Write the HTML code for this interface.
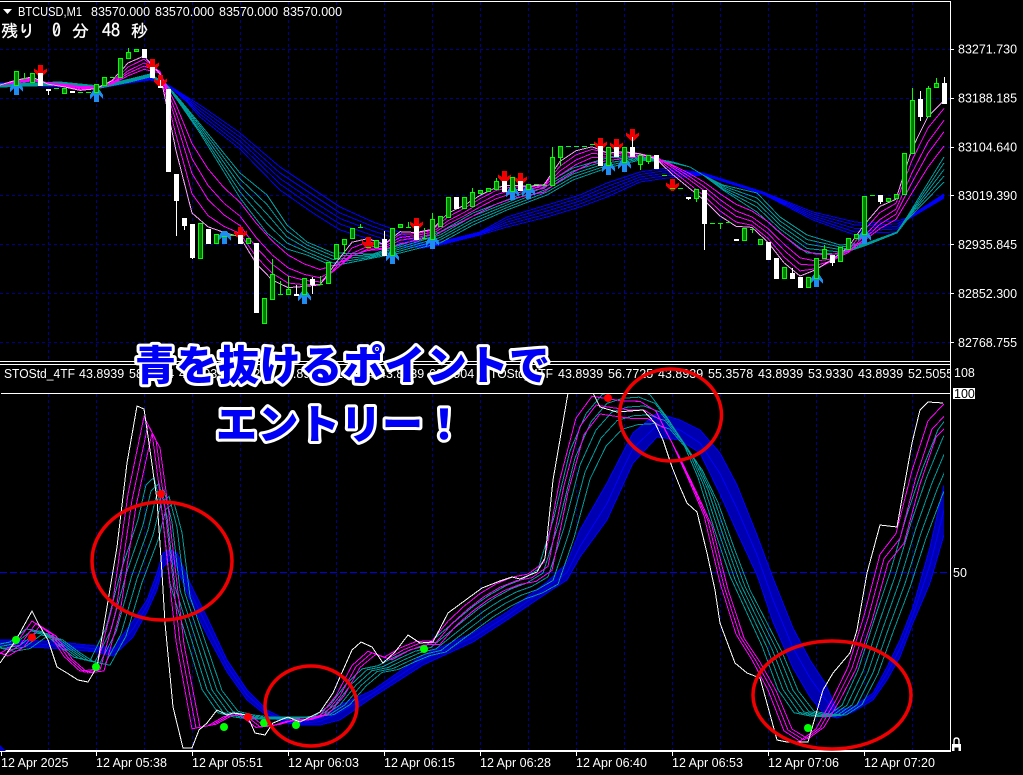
<!DOCTYPE html>
<html lang="ja"><head><meta charset="utf-8"><title>BTCUSD,M1</title>
<style>
html,body{margin:0;padding:0;background:#000;width:1023px;height:775px;overflow:hidden}
svg{position:absolute;left:0;top:0;display:block}
.t{font-family:"Liberation Sans",sans-serif;font-size:12.5px;fill:#fff}
.j{font-family:"IPAGothic","Noto Sans CJK JP",monospace;font-size:17px;fill:#fff;stroke:#fff;stroke-width:.35px}
.o{font-family:"Liberation Sans","Noto Sans CJK JP",sans-serif;font-weight:900;font-size:41px;fill:#0000f5;stroke:#fff;stroke-width:6px;stroke-linejoin:round;paint-order:stroke}
</style></head><body>
<svg xmlns="http://www.w3.org/2000/svg" width="1023" height="775" viewBox="0 0 1023 775">
<defs>
<clipPath id="c"><rect x="0" y="364" width="950" height="29"/></clipPath>
<clipPath id="lw"><rect x="0" y="394" width="944" height="356"/></clipPath>
<polygon id="ra" points="-2,0 3,0 3,6 7,3.500 7,7 1.500,12 -.5,12 -6,7 -6,3.500 -2,6"/>
<polygon id="ba" points=".5,-1 3,-1 7,5 7,9 3,5 3,12 -2,12 -2,5 -6,9 -6,5 -2,-1"/>
<polyline id="A" points="-32,640 0,654.700 16,645.300 32,623.300 48,634 64,657.700 80,672 96,670.100 112,610.500 128,500 144,425 152,440 160,500 176,642.600 192,728 208,725 224,716 240,714.500 256,726.600 272,725.100 288,720.200 304,720 320,714.900 336,695.900 352,666.500 368,652.700 384,658.600 400,649.500 416,643.200 432,642.600 448,623.500 464,609 480,596.700 496,587.300 512,580.800 528,577.700 544,566.400 560,485.500 576,426.300 592,405.100 608,407.600 624,409.800 640,410 656,419.600 672,450.400 688,484.700 704,520.800 720,586.200 736,636.100 752,661 768,690.300 784,730 800,740 816,728 832,700 848,668 864,618.200 880,558.600 896,538.400 912,477.300 928,429 944,412.400 960,405"/>
<polyline id="B" points="-32,640 0,648.300 16,645.300 32,633 48,635.500 64,648.300 80,659.700 96,663 112,632 128,575 144,530 152,497 160,490 168,522 176,590 192,640 208,690 224,712 240,716 256,718 272,718 288,718 304,717.400 320,715.500 336,704.900 352,685.100 368,670.700 384,667.600 400,659.800 416,652.700 432,648.900 448,636 464,623.400 480,611 496,600.600 512,592.100 528,586.300 544,576.800 560,527.600 576,465 592,430 608,412 624,407 640,406 656,412 672,432 688,455 704,490 720,538 736,583 752,616 768,649 784,690 800,712 816,715 832,716 848,705 864,672 880,625 896,580 912,528 928,483 944,445 960,425"/>
</defs>
<rect width="1023" height="775" fill="#000"/>
<g shape-rendering="crispEdges" fill="none" stroke="#00008c" stroke-dasharray="3 3">
<path d="M48.500 2V361M96.500 2V361M144.500 2V361M192.500 2V361M240.500 2V361M288.500 2V361M336.500 2V361M384.500 2V361M432.500 2V361M480.500 2V361M528.500 2V361M576.500 2V361M624.500 2V361M672.500 2V361M720.500 2V361M768.500 2V361M816.500 2V361M864.500 2V361M912.500 2V361"/>
<path d="M48.500 394V750M96.500 394V750M144.500 394V750M192.500 394V750M240.500 394V750M288.500 394V750M336.500 394V750M384.500 394V750M432.500 394V750M480.500 394V750M528.500 394V750M576.500 394V750M624.500 394V750M672.500 394V750M720.500 394V750M768.500 394V750M816.500 394V750M864.500 394V750M912.500 394V750"/>
<path d="M0 49.500H950M0 98.500H950M0 147.500H950M0 195.500H950M0 244.500H950M0 293.500H950M0 342.500H950"/>
</g>
<path d="M0 572.500H950" stroke="#0000e0" stroke-dasharray="7 3" shape-rendering="crispEdges"/>

<!-- upper ribbons -->
<g shape-rendering="crispEdges" fill="none">
<g stroke="#0000ff">
<polyline points="0,83 100,86 130,81 150,78 165,83 187,97 200,105 240,133 280,167 313,189 340,207 373,222 390,228 423,244 440,242 480,232 507,217 547,205 580,195 607,183 640,172 667,168 703,173 763,192 813,212 855,222 867,223 897,221 907,218 944,194"/>
<polyline points="0,83.500 100,86.500 130,81.500 150,78.500 165,83 187,98 200,108 240,137 280,173 313,195 340,213 373,226.500 390,232 423,245 440,243 480,233 507,219.500 547,208 580,198 607,186.500 640,174.500 667,170.500 703,173.500 763,192.500 813,214 855,225 867,225.500 897,224 907,218.500 944,195"/>
<polyline points="0,84 100,87 130,82 150,79 165,83 187,99.500 200,111 240,141 280,178.500 313,201 340,218.500 373,231 390,236.500 423,246 440,243.500 480,233.500 507,222 547,211 580,201 607,190 640,177 667,173 703,174 763,193 813,216 855,228.500 867,228 897,226.500 907,219 944,196"/>
<polyline points="0,84.500 100,87.500 130,82.500 150,79.500 165,83 187,101 200,114 240,145 280,184 313,207 340,224 373,235.500 390,241 423,247 440,244 480,234 507,224.500 547,214 580,204 607,193.500 640,179.500 667,175.500 703,174.500 763,193.500 813,218 855,232 867,230.500 897,229 907,219.500 944,197"/>
<polyline points="0,85 100,88 130,83 150,80 165,83 187,102 200,117 240,149 280,190 313,213 340,230 373,240 390,245 423,248 440,245 480,235 507,227 547,217 580,207 607,197 640,182 667,178 703,175 763,194 813,220 855,235 867,233 897,232 907,220 944,198"/>
</g>
<g stroke="#009b9b">
<polyline points="0,84 60,82 100,86 130,79 150,74 165,83 180,100 200,124 240,173 267,195 287,225 307,242 333,253 373,254 400,245 440,232 473,213 507,200 547,183 573,168 607,158 640,156 673,162 690,167 703,175 723,185 757,193 780,217 807,235 840,245 867,243 897,232 907,217 944,157"/>
<polyline points="0,84.800 60,82.800 100,86.500 130,79.800 150,74.800 165,83 180,101 200,126 240,179 267,204.500 287,231 307,245 333,256 373,255 400,247 440,235 473,216 507,202.500 547,186 573,171 607,160.500 640,157 673,162.300 690,167 703,175 723,186 757,198 780,221 807,239.500 840,247 867,243.500 897,232.300 907,218 944,163"/>
<polyline points="0,85.500 60,83.500 100,87 130,80.500 150,75.500 165,83 180,102 200,128.500 240,185.500 267,214 287,237 307,248.500 333,259.500 373,256 400,249 440,237.500 473,219 507,205 547,189 573,174 607,163 640,158 673,162.500 690,167 703,175 723,187.500 757,202.500 780,225 807,244 840,249.500 867,244 897,232.500 907,218.500 944,169.500"/>
<polyline points="0,86.300 60,84.300 100,87.500 130,81.300 150,76.300 165,83 180,103 200,131 240,192 267,223.500 287,243 307,252 333,263 373,257 400,251 440,240 473,222 507,207.500 547,192 573,177 607,165.500 640,159 673,162.800 690,167 703,175 723,189 757,207 780,229 807,248.500 840,252 867,244.500 897,232.800 907,219 944,176"/>
<polyline points="0,87 60,85 100,88 130,82 150,77 165,83 180,104 200,133 240,198 267,233 287,249 307,255 333,266 373,258 400,253 440,243 473,225 507,210 547,195 573,180 607,168 640,160 673,163 690,167 703,175 723,190 757,212 780,233 807,253 840,254 867,245 897,233 907,220 944,182"/>
</g>
<g stroke="#ff00ff">
<polyline points="0,85 16,83 32,80.900 48,82.800 64,84.300 80,86.500 96,86.900 112,84.100 128,75.800 144,69.300 160,72.900 176,104.800 192,143.500 208,168.900 224,187.700 240,202.300 256,222.900 272,240.700 288,255 304,263.800 320,269.500 336,264.800 352,255.800 368,250.400 384,249.400 400,243.700 416,240.600 432,237 448,228.200 464,220.700 480,212.300 496,204.300 512,198.600 528,195.300 544,192.100 560,180.400 576,170.600 592,162.700 608,160.800 624,158 640,157.100 656,158.200 672,164.700 688,172.700 704,182.100 720,193.700 736,204.300 752,211 768,221.800 784,236 800,249.100 816,254.200 832,254.400 848,250.900 864,240.700 880,228.600 896,219.400 912,192.900 928,167.100 944,146"/>
<polyline points="0,85 16,82.500 32,80 48,82.700 64,84.600 80,87.300 96,87.500 112,83.700 128,73.400 144,66.100 160,71.800 176,112.500 192,158.700 208,185.400 224,203.300 240,216.100 256,237.300 272,254.800 288,267.800 304,274.300 320,277.800 336,268.900 352,256 368,249.100 384,248.300 400,240.300 416,237.700 432,234.200 448,224 464,216 480,207 496,198.700 512,193.400 528,191.100 544,188.500 560,175 576,164.600 592,157.500 608,157 624,154.800 640,154.900 656,157 672,165.600 688,175.500 704,186.500 720,199.600 736,210.900 752,217 768,228.500 784,244.200 800,257.800 816,261.100 832,258.900 848,252.800 864,239.200 880,224.300 896,214.100 912,182.400 928,153.400 944,131.700"/>
<polyline points="0,85 16,81.900 32,79.100 48,82.800 64,85.100 80,88.100 96,88 112,83.200 128,70.900 144,63 160,71.300 176,121 192,173.500 208,199.500 224,215 240,225.500 256,247.100 272,264.100 288,275.900 304,280.300 320,281.900 336,269.300 352,253.400 368,246.200 384,246.600 400,237.500 416,235.500 432,232.300 448,220.800 464,212.500 480,203.100 496,194.800 512,190.100 528,188.700 544,186.600 560,171 576,160 592,153.400 608,154.500 624,153 640,153.800 656,156.900 672,167.400 688,178.600 704,190.500 720,204.700 736,216.200 752,221.300 768,233.400 784,250.300 800,264.200 816,265.400 832,260.800 848,252.600 864,236.100 880,219.500 896,209.200 912,172.800 928,141.800 944,120.400"/>
<polyline points="0,85 16,81.100 32,77.900 48,83.200 64,85.900 80,89.300 96,88.500 112,82.100 128,67 144,59.200 160,71.900 176,134.800 192,193.800 208,215.600 224,226.400 240,233.400 256,256.500 272,273.100 288,283 304,284.700 320,284.300 336,267 352,248 368,241.800 384,244.700 400,234.300 416,233.600 432,230.400 448,216.800 464,208.500 480,198.800 496,190.500 512,186.900 528,187 544,185.300 560,166.200 576,154.900 592,149.400 608,153 624,151.900 640,153.600 656,157.700 672,170.600 688,183 704,195.800 720,210.900 736,222 752,225.300 768,238.500 784,257 800,270.900 816,268.700 832,261 848,250.400 864,230.700 880,212.500 896,203.300 912,160.300 928,127.900 944,108.500"/>
</g>
<polyline stroke="#ffa0ff" points="0,85 16,80.200 32,77 48,84.200 64,86.800 80,90.400 96,88.700 112,80.600 128,63 144,56 160,73.900 176,150.500 192,213 208,226.800 224,232.400 240,236.900 256,263.200 272,279.900 288,287.600 304,286.500 320,284.800 336,262.800 352,242.200 368,238.600 384,244.400 400,231.700 416,232.500 432,229.400 448,213.200 464,205.400 480,195.400 496,187.500 512,185 528,186.300 544,184.700 560,161.400 576,150.800 592,146.800 608,153.100 624,151.600 640,153.900 656,158.800 672,174 688,187.100 704,200.100 720,215.900 736,226.300 752,227.400 768,242.300 784,262.800 800,276 816,269.700 832,259.500 848,247.400 864,225 880,206.400 896,199.200 912,148.700 928,116.500 944,100.300"/>
</g>

<!-- arrows -->
<g shape-rendering="crispEdges" fill="#f00000">
<use href="#ra" x="40" y="65"/><use href="#ra" x="152" y="59"/><use href="#ra" x="160" y="75"/><use href="#ra" x="240" y="227"/><use href="#ra" x="368" y="237"/><use href="#ra" x="416" y="218"/><use href="#ra" x="504" y="171"/><use href="#ra" x="520" y="173"/><use href="#ra" x="600" y="138"/><use href="#ra" x="616" y="139"/><use href="#ra" x="632" y="129"/><use href="#ra" x="672" y="179"/>
</g>
<g shape-rendering="crispEdges" fill="#1e8cf0">
<use href="#ba" x="16" y="83"/><use href="#ba" x="96" y="90"/><use href="#ba" x="224" y="232"/><use href="#ba" x="304" y="292"/><use href="#ba" x="392" y="252"/><use href="#ba" x="432" y="237"/><use href="#ba" x="512" y="188"/><use href="#ba" x="528" y="187"/><use href="#ba" x="608" y="163"/><use href="#ba" x="624" y="160"/><use href="#ba" x="816" y="275"/><use href="#ba" x="864" y="232"/>
</g>

<!-- candles -->
<g shape-rendering="crispEdges">
<path fill="#00ff00" d="M24 73h1v6h-1zM22 78h5v1h-5zM54 88h5v1h-5zM78 92h5v1h-5zM86 92h5v1h-5zM110 77h5v1h-5zM222 236h5v1h-5zM230 235h5v1h-5zM280 281h1v14h-1zM278 294h5v1h-5zM320 276h1v9h-1zM318 284h5v1h-5zM360 224h1v4h-1zM358 227h5v1h-5zM366 247h5v1h-5zM408 222h1v6h-1zM406 227h5v1h-5zM424 228h1v11h-1zM422 238h5v1h-5zM534 184h5v1h-5zM542 185h5v1h-5zM566 146h5v1h-5zM574 146h5v1h-5zM582 146h5v1h-5zM590 144h5v1h-5zM662 175h5v1h-5zM670 188h5v1h-5zM678 188h5v1h-5zM710 223h5v1h-5zM720 223h1v6h-1zM718 223h5v1h-5zM726 222h5v1h-5zM752 229h1v4h-1zM750 229h5v1h-5zM870 195h5v1h-5zM128 48h1v5h-1zM272 259h1v16h-1zM288 276h1v14h-1zM344 244h1v10h-1zM432 213h1v7h-1zM472 188h1v5h-1zM496 178h1v4h-1zM552 147h1v11h-1zM560 157h1v9h-1zM640 164h1v6h-1zM648 161h1v3h-1zM696 198h1v4h-1zM824 245h1v5h-1zM912 88h1v13h-1zM928 86h1v3h-1zM936 78h1v6h-1z"/>
<path fill="#007a00" stroke="#00ff00" d="M14.500 71.500h4V85.500h-4zM30.500 73.500h4V82.500h-4zM62.500 88.500h4V93.500h-4zM94.500 84.500h4V92.500h-4zM102.500 77.500h4V85.500h-4zM118.500 58.500h4V77.500h-4zM126.500 52.500h4V58.500h-4zM134.500 49.500h4V51.500h-4zM198.500 223.500h4V258.500h-4zM214.500 234.500h4V243.500h-4zM246.500 238.500h4V243.500h-4zM262.500 298.500h4V323.500h-4zM270.500 274.500h4V299.500h-4zM286.500 289.500h4V294.500h-4zM302.500 278.500h4V294.500h-4zM326.500 262.500h4V283.500h-4zM334.500 244.500h4V258.500h-4zM342.500 239.500h4V244.500h-4zM350.500 228.500h4V238.500h-4zM374.500 240.500h4V247.500h-4zM390.500 228.500h4V255.500h-4zM398.500 224.500h4V227.500h-4zM430.500 219.500h4V239.500h-4zM438.500 216.500h4V226.500h-4zM446.500 197.500h4V217.500h-4zM462.500 197.500h4V208.500h-4zM470.500 192.500h4V206.500h-4zM478.500 190.500h4V193.500h-4zM486.500 188.500h4V191.500h-4zM494.500 181.500h4V189.500h-4zM510.500 177.500h4V191.500h-4zM526.500 184.500h4V189.500h-4zM550.500 157.500h4V185.500h-4zM558.500 146.500h4V157.500h-4zM606.500 147.500h4V165.500h-4zM622.500 147.500h4V162.500h-4zM638.500 155.500h4V164.500h-4zM646.500 155.500h4V161.500h-4zM694.500 189.500h4V198.500h-4zM742.500 228.500h4V240.500h-4zM758.500 239.500h4V244.500h-4zM782.500 267.500h4V278.500h-4zM806.500 277.500h4V287.500h-4zM814.500 258.500h4V278.500h-4zM822.500 249.500h4V258.500h-4zM838.500 247.500h4V261.500h-4zM846.500 238.500h4V249.500h-4zM854.500 234.500h4V238.500h-4zM862.500 196.500h4V234.500h-4zM886.500 198.500h4V201.500h-4zM894.500 194.500h4V198.500h-4zM902.500 153.500h4V194.500h-4zM910.500 100.500h4V153.500h-4zM926.500 88.500h4V116.500h-4zM934.500 83.500h4V87.500h-4z"/>
<path fill="#ffffff" d="M38 73h5V86h-5zM46 89h5V91h-5zM48 89h1V95h-1zM70 91h5V93h-5zM142 49h5V58h-5zM150 67h5V78h-5zM158 86h5V88h-5zM160 80h1V88h-1zM166 89h5V172h-5zM174 174h5V201h-5zM176 174h1V236h-1zM182 218h5V226h-5zM184 218h1V230h-1zM190 224h5V258h-5zM192 224h1V259h-1zM206 229h5V244h-5zM238 235h5V244h-5zM254 243h5V313h-5zM294 294h5V296h-5zM296 285h1V296h-1zM310 279h5V285h-5zM312 277h1V294h-1zM382 239h5V256h-5zM384 231h1V240h-1zM414 226h5V240h-5zM454 197h5V209h-5zM502 181h5V192h-5zM518 181h5V191h-5zM598 146h5V166h-5zM614 147h5V157h-5zM630 147h5V157h-5zM632 137h1V148h-1zM654 155h5V169h-5zM686 197h5V199h-5zM688 197h1V200h-1zM702 190h5V224h-5zM704 190h1V250h-1zM734 239h5V241h-5zM766 242h5V260h-5zM774 258h5V279h-5zM790 273h5V279h-5zM792 268h1V279h-1zM798 277h5V288h-5zM830 255h5V263h-5zM832 255h1V266h-1zM878 195h5V202h-5zM880 195h1V204h-1zM918 99h5V117h-5zM920 91h1V121h-1zM942 83h5V104h-5zM944 77h1V104h-1z"/>
</g>

<!-- lower ribbons -->
<g shape-rendering="crispEdges" fill="none" clip-path="url(#lw)">
<polygon fill="#0000b0" points="0,640 50,641 97,646 113,648 133,621 147,600 157,573 163,553 170,550 177,553 190,583 207,617 227,660 247,690 267,710 287,720 300,722 320,718 340,705 373,690 423,655 473,633 507,612 547,582 567,563 580,530 607,483 623,452 633,433 657,413 680,420 700,430 720,453 737,485 757,535 773,578 793,628 810,660 825,683 837,710 853,707 873,693 887,667 900,640 913,607 930,547 944,485 944,535 930,583 913,623 900,657 887,680 873,700 853,712 837,718 825,715 810,697 793,668 773,622 757,575 737,532 720,494 700,453 680,440 657,437 633,463 623,485 607,520 580,557 567,580 547,593 507,620 473,642 423,665 373,697 340,720 320,725 300,725 287,723 267,716 247,700 227,672 207,635 190,600 177,568 170,560 163,567 157,590 147,612 133,637 113,656 97,652 50,648 0,646"/>
<g stroke="#0000ff">
<polyline points="0,640 50,641 97,646 113,648 133,621 147,600 157,573 163,553 170,550 177,553 190,583 207,617 227,660 247,690 267,710 287,720 300,722 320,718 340,705 373,690 423,655 473,633 507,612 547,582 567,563 580,530 607,483 623,452 633,433 657,413 680,420 700,430 720,453 737,485 757,535 773,578 793,628 810,660 825,683 837,710 853,707 873,693 887,667 900,640 913,607 930,547 944,485"/>
<polyline points="0,643 50,644.500 97,649 113,652 133,629 147,606 157,581.500 163,560 170,555 177,560.500 190,591.500 207,626 227,666 247,695 267,713 287,721.500 300,723.500 320,721.500 340,712.500 373,693.500 423,660 473,637.500 507,616 547,587.500 567,572.500 580,546.500 607,503.500 623,468.500 633,448.500 657,425 680,430 700,443 720,473.500 737,508.500 757,555 773,600 793,648 810,678 825,699 837,714 853,709.500 873,696.500 887,673.500 900,648.500 913,615 930,565 944,510"/>
<polyline points="0,646 50,648 97,652 113,656 133,637 147,612 157,590 163,567 170,560 177,568 190,600 207,635 227,672 247,700 267,716 287,723 300,725 320,725 340,720 373,697 423,665 473,642 507,620 547,593 567,580 580,557 607,520 623,485 633,463 657,437 680,440 700,453 720,494 737,532 757,575 773,622 793,668 810,697 825,715 837,718 853,712 873,700 887,680 900,657 913,623 930,583 944,535"/>
</g>
<g stroke="#009b9b">
<use href="#B" transform="translate(14,42) scale(1,.94)"/><use href="#B" transform="translate(9,21) scale(1,.97)"/><use href="#B" transform="translate(4,0)"/><use href="#B" transform="translate(-1,-21) scale(1,1.03)"/><use href="#B" transform="translate(-6,-42) scale(1,1.06)"/>
</g>
<g stroke="#ff00ff">
<use href="#A" transform="translate(8,21) scale(1,.97)"/><use href="#A" transform="translate(4,0)"/><use href="#A" transform="translate(0,-21) scale(1,1.03)"/>
</g>
<polyline stroke="#fff" points="0,663 16,640 32,611 38,623 48,640 57,667 67,673 78,680 88,682 97,667 107,607 117,547 127,463 137,406 144,409 150,450 157,500 162,573 165,623 173,707 183,748 192,748 199,730 207,723 217,710 227,715 233,713 247,715 255,733 265,735 273,723 288,717 300,722 320,712 333,693 340,677 352,650 361,642 372,647 383,663 395,652 408,635 420,643 433,642 448,613 467,599 482,588 500,581 512,577 520,579 537,572 545,558 553,480 568,393 593,393 600,407 617,412 630,411 643,410 655,423 663,440 672,467 680,487 687,503 697,512 707,553 715,590 720,623 735,663 747,673 760,678 768,707 777,740 787,742 808,742 823,690 833,673 850,653 857,630 867,573 880,525 897,527 903,493 912,443 920,410 928,402 943,403"/>
</g>
<g fill="#00ff00"><circle cx="16" cy="640" r="4"/><circle cx="96" cy="667" r="4"/><circle cx="224" cy="727" r="4"/><circle cx="264" cy="723" r="4"/><circle cx="296" cy="725" r="4"/><circle cx="424" cy="649" r="4"/><circle cx="808" cy="728" r="4"/></g>
<g fill="#ff0000"><circle cx="32" cy="637.500" r="4"/><circle cx="161" cy="494" r="4"/><circle cx="248" cy="717" r="4"/><circle cx="608" cy="398" r="4"/></g>

<!-- frame -->
<g shape-rendering="crispEdges" fill="#fff">
<rect x="0" y="1" width="951" height="1"/>
<rect x="950" y="1" width="1" height="751"/>
<rect x="0" y="361" width="950" height="1"/>
<rect x="0" y="364" width="950" height="1"/>
<rect x="1" y="393" width="949" height="1"/>
<rect x="0" y="750" width="951" height="2"/>
<rect x="951" y="49" width="3" height="1"/><rect x="951" y="98" width="3" height="1"/><rect x="951" y="147" width="3" height="1"/><rect x="951" y="195" width="3" height="1"/><rect x="951" y="244" width="3" height="1"/><rect x="951" y="293" width="3" height="1"/><rect x="951" y="342" width="3" height="1"/>
<rect x="1" y="752" width="1" height="4"/><rect x="96" y="752" width="1" height="4"/><rect x="192" y="752" width="1" height="4"/><rect x="288" y="752" width="1" height="4"/><rect x="384" y="752" width="1" height="4"/><rect x="480" y="752" width="1" height="4"/><rect x="576" y="752" width="1" height="4"/><rect x="672" y="752" width="1" height="4"/><rect x="768" y="752" width="1" height="4"/><rect x="864" y="752" width="1" height="4"/>
</g>
<polygon points="0,745 6,751 0,751" fill="#0000d0"/>
<polygon points="3,9 12,9 7.500,14" fill="#fff"/>
<text class="t" x="18" y="16" textLength="64" lengthAdjust="spacingAndGlyphs">BTCUSD,M1</text>
<text class="t" x="91" y="16">83570.000</text>
<text class="t" x="155" y="16">83570.000</text>
<text class="t" x="219" y="16">83570.000</text>
<text class="t" x="283" y="16">83570.000</text>
<text class="j" x="1" y="37">残り</text>
<text class="j" x="52" y="37" style="font-size:18px">0</text>
<text class="j" x="72" y="37">分</text>
<text class="j" x="102" y="37" style="font-size:18px">48</text>
<text class="j" x="131" y="37">秒</text>
<text class="t" x="958" y="53.500">83271.730</text>
<text class="t" x="958" y="102.500">83188.185</text>
<text class="t" x="958" y="151.500">83104.640</text>
<text class="t" x="958" y="200">83019.390</text>
<text class="t" x="958" y="249">82935.845</text>
<text class="t" x="958" y="298">82852.300</text>
<text class="t" x="958" y="347">82768.755</text>
<g clip-path="url(#c)">
<text class="t" x="4" y="378" textLength="71" lengthAdjust="spacingAndGlyphs">STOStd_4TF</text>
<text class="t" x="79" y="378">43.8939</text><text class="t" x="129" y="378">58.1504</text>
<text class="t" x="179" y="378">43.8939</text><text class="t" x="229" y="378">62.1204</text>
<text class="t" x="279" y="378">43.8939</text><text class="t" x="329" y="378">61.4504</text>
<text class="t" x="379" y="378">43.8939</text><text class="t" x="429" y="378">60.6904</text>
<text class="t" x="482" y="378" textLength="71" lengthAdjust="spacingAndGlyphs">STOStd_4TF</text>
<text class="t" x="558" y="378">43.8939</text><text class="t" x="608" y="378">56.7725</text>
<text class="t" x="658" y="378">43.8939</text><text class="t" x="708" y="378">55.3578</text>
<text class="t" x="758" y="378">43.8939</text><text class="t" x="808" y="378">53.9330</text>
<text class="t" x="858" y="378">43.8939</text><text class="t" x="908" y="378">52.5055</text>
</g>
<text class="t" x="954" y="377">108</text>
<rect x="953" y="388" width="22" height="11" fill="#fff"/>
<text class="t" x="954" y="398" style="fill:#000">100</text>
<text class="t" x="953" y="577">50</text>
<rect x="952" y="744" width="9" height="7" fill="#fff"/>
<path d="M954 745v-4q0-3 2.500-3t2.500 3v4" fill="none" stroke="#fff" stroke-width="1.400"/>
<path d="M954.500 751v-3.500h4v3.500" fill="#000"/>
<text class="t" x="1" y="767">12 Apr 2025</text>
<text class="t" x="96" y="767">12 Apr 05:38</text>
<text class="t" x="192" y="767">12 Apr 05:51</text>
<text class="t" x="288" y="767">12 Apr 06:03</text>
<text class="t" x="384" y="767">12 Apr 06:15</text>
<text class="t" x="480" y="767">12 Apr 06:28</text>
<text class="t" x="576" y="767">12 Apr 06:40</text>
<text class="t" x="672" y="767">12 Apr 06:53</text>
<text class="t" x="768" y="767">12 Apr 07:06</text>
<text class="t" x="864" y="767">12 Apr 07:20</text>
<g fill="none" stroke="#f00000" stroke-width="3.500">
<ellipse cx="162" cy="561" rx="70" ry="59"/>
<ellipse cx="311" cy="706" rx="46" ry="40"/>
<ellipse cx="670.500" cy="415" rx="51" ry="46"/>
<ellipse cx="832" cy="695" rx="79" ry="54"/>
</g>
<text class="o" x="135" y="380" textLength="415">青を抜けるポイントで</text>
<text class="o" x="216" y="439" style="letter-spacing:.5px">エントリー！</text>
</svg>
</body></html>
